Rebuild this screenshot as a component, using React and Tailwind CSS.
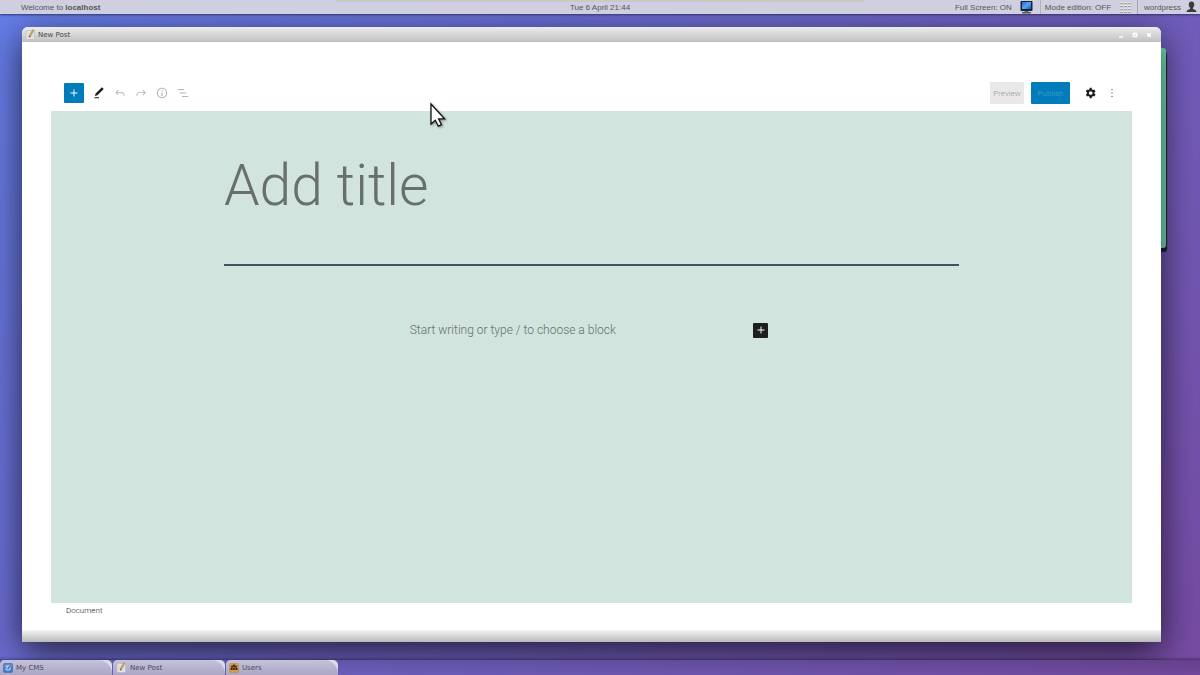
import React from "react";

function NoteIcon() {
  return (
    <svg className="size-[11px] shrink-0" viewBox="0 0 22 22" aria-hidden="true">
      <rect x="2" y="3" width="17" height="18" rx="2" fill="#e3e3e6" stroke="#b4b4b9" />
      <path d="M5 8h11M5 12h11M5 16h11" stroke="#cdcdd2" strokeWidth="1.2" />
      <path d="M15.500 1l2.600 1.400-7 12.400-2.700 1.800.1-3.600z" fill="#e0a548" stroke="#8a7350" strokeWidth=".8" />
      <path d="M8.500 13.500l-.1 3.500 2.700-1.800z" fill="#444" />
    </svg>
  );
}

function CmsIcon() {
  return (
    <svg className="size-[10px] shrink-0" viewBox="0 0 20 20" aria-hidden="true">
      <rect x="1" y="1" width="18" height="18" rx="2" fill="#3a7bd0" stroke="#2e62a8" />
      <rect x="2" y="2" width="16" height="6" fill="#5b9ae6" opacity=".7" />
      <circle cx="10" cy="10" r="5.5" fill="#b9d3f4" />
      <path d="M5 8l5 5 5-7" fill="none" stroke="#4169b5" strokeWidth="2" />
      <path d="M9 9l6-5-3 6z" fill="#d0405a" />
    </svg>
  );
}

function UsersIcon() {
  return (
    <svg className="size-[10px] shrink-0" viewBox="0 0 20 20" aria-hidden="true">
      <rect x="1" y="1" width="18" height="18" rx="2" fill="#d89a4a" stroke="#b98440" />
      <circle cx="6" cy="7" r="2" fill="#3a2a1c" />
      <circle cx="14" cy="7" r="2" fill="#3a2a1c" />
      <circle cx="10" cy="5.500" r="2.400" fill="#3a2a1c" />
      <path d="M3 14v-3c0-1.500 1.500-2 3-2h8c1.500 0 3 .5 3 2v3z" fill="#3a2a1c" />
      <path d="M7.500 10v4M12.500 10v4" stroke="#d89a4a" strokeWidth="1" />
    </svg>
  );
}

function ScreenIcon() {
  return (
    <svg className="h-[13px] w-[13px]" viewBox="0 0 26 26" aria-hidden="true">
      <defs>
        <linearGradient id="screen" x1="0" y1="0" x2="1" y2="1">
          <stop offset="0" stopColor="#1f63d8" />
          <stop offset=".5" stopColor="#5aa2f5" />
          <stop offset="1" stopColor="#1556c4" />
        </linearGradient>
      </defs>
      <rect x="1" y="0" width="24" height="20" rx="2" fill="#1c2130" />
      <rect x="4" y="2" width="18" height="14" fill="url(#screen)" />
      <rect x="9" y="20" width="8" height="2" fill="#6d6d74" />
      <rect x="4" y="22" width="18" height="3" rx="1" fill="#55555c" />
    </svg>
  );
}

function GridIcon() {
  const rows = [0, 3, 6, 9];
  const cols = [0, 4, 8];
  return (
    <svg className="h-[11px] w-[11px]" viewBox="0 0 11 11" shapeRendering="crispEdges" aria-hidden="true">
      {rows.map((y) => cols.map((x) => (
        <g key={`${x}-${y}`}>
          <rect x={x} y={y} width="3" height="1" fill="#e4e4e2" />
          <rect x={x} y={y + 1} width="3" height="1" fill="#a4a4a8" />
        </g>
      )))}
    </svg>
  );
}

function PersonIcon() {
  return (
    <svg className="h-[12px] w-[11px]" viewBox="0 0 22 24" fill="#3b3a3c" aria-hidden="true">
      <path d="M11 1c3.500 0 5.500 2.500 5.500 6 0 3-1.200 5.500-2.700 6.800v2.400c3.500 1 7.200 2 7.200 5.800H1c0-3.800 3.700-4.800 7.200-5.800v-2.400C6.700 12.500 5.500 10 5.500 7c0-3.500 2-6 5.500-6z" />
    </svg>
  );
}

const glyphs = {
  plus: "M18 11.200h-5.200V6h-1.600v5.200H6v1.600h5.200V18h1.600v-5.200H18z",
  edit: "M20.100 5.100L16.900 2 6.200 12.700l-1.300 4.400 4.500-1.300L20.100 5.100zM4 20.800h8v-1.500H4v1.500z",
  undo: "M18.300 11.700c-.6-.6-1.400-.9-2.300-.9H6.700l2.900-3.300-1.100-1-4.500 5L8.500 16l1-1-2.700-2.700H16c.5 0 .9.2 1.300.5 1 1 1 3.400 1 4.500v.3h1.500v-.2c0-1.500 0-4.300-1.500-5.700z",
  redo: "M15.600 6.500l-1.100 1 2.900 3.300H8c-.9 0-1.700.3-2.300.9-1.400 1.500-1.400 4.200-1.400 5.600v.2h1.500v-.3c0-1.100 0-3.500 1-4.500.3-.3.7-.5 1.300-.5h9.200L14.500 15l1.100 1.100 4.600-4.600-4.600-5z",
  info: "M12 3.200c-4.800 0-8.800 3.900-8.800 8.800 0 4.800 3.900 8.800 8.800 8.800 4.800 0 8.800-3.900 8.800-8.800 0-4.800-4-8.800-8.800-8.800zm0 16c-4 0-7.200-3.300-7.200-7.200C4.800 8 8 4.800 12 4.800s7.200 3.300 7.200 7.200c0 4-3.200 7.200-7.200 7.200zM11 17h2v-6h-2v6zm0-8h2V7h-2v2z",
  outline: "M13.800 5.200H3v1.500h10.800V5.200zm-3.600 12v1.500H21v-1.500H10.200zm7.200-6H6.600v1.500h10.800v-1.500z",
  more: "M13 19h-2v-2h2v2zm0-6h-2v-2h2v2zm0-6h-2V5h2v2z",
  gear: "M18 12c0-.4 0-.8-.1-1.200l1.900-1.500-2-3.500-2.300.9c-.6-.5-1.300-.9-2-1.200L13.200 3H9.800l-.4 2.500c-.7.300-1.400.7-2 1.200L5.100 5.800l-2 3.500L5 10.800c-.1.800-.1 1.600 0 2.400l-1.900 1.500 2 3.500 2.300-.9c.6.5 1.300.9 2 1.200l.4 2.500h3.400l.4-2.500c.7-.3 1.400-.7 2-1.200l2.300.9 2-3.500-2-1.500c.1-.4.1-.8.1-1.200zm-6.500 3.200a3.200 3.200 0 1 1 0-6.400 3.200 3.200 0 0 1 0 6.400z",
};

function Glyph({ name, className = "size-[14px]" }) {
  return (
    <svg className={className} viewBox="0 0 24 24" fill="currentColor" fillRule="evenodd" aria-hidden="true">
      <path d={glyphs[name]} />
    </svg>
  );
}

function ToolButton({ name, label, className }) {
  return (
    <button type="button" aria-label={label} className={`flex size-[14px] items-center justify-center ${className}`}>
      <Glyph name={name} />
    </button>
  );
}

function TopBar() {
  return (
    <header className="relative z-10 grid h-[14px] shrink-0 grid-cols-[1fr_auto_1fr] items-center bg-[#cfcfdf] font-['Liberation_Sans',sans-serif] text-[8px] leading-[12px] text-[#55555b] shadow-[0_1px_2px_rgba(30,30,70,0.7)]">
      <div className="absolute top-0 left-[28%] h-[2px] w-[44%] bg-[#c9c9c9]" />
      <p className="pt-[2px] pl-[21px]">Welcome to <b>localhost</b></p>
      <time className="pt-[2px]">Tue 6 April 21:44</time>
      <div className="flex h-[14px] items-center justify-end pr-[3px]">
        <button type="button" className="flex h-[14px] items-center gap-2">
          <span className="pt-[2px]">Full Screen: ON</span>
          <ScreenIcon />
        </button>
        <div className="ml-[7px] h-[14px] w-px bg-[#b2b2bd]" />
        <button type="button" className="ml-1 flex h-[14px] items-center gap-[9px]">
          <span className="pt-[2px]">Mode edition: OFF</span>
          <GridIcon />
        </button>
        <div className="ml-[6px] h-[14px] w-px bg-[#a6a6b0]" />
        <button type="button" className="ml-[6px] flex h-[14px] items-center gap-[5px]">
          <span className="pt-[2px]">wordpress</span>
          <PersonIcon />
        </button>
      </div>
    </header>
  );
}

function TitleBar() {
  return (
    <div className="flex h-[15px] shrink-0 items-center rounded-t-[6px] bg-linear-to-b from-[#ececec] to-[#c1c1c1] pr-2 pl-[3px] font-['DejaVu_Sans',sans-serif] text-[7px] text-[#444]">
      <NoteIcon />
      <h1 className="flex-1 pt-[2px] pl-[2px]">New Post</h1>
      <div className="flex gap-[6px] text-white">
        <button type="button" aria-label="Minimize" className="size-2">
          <svg className="size-2" viewBox="0 0 8 8"><path d="M2 6h4" stroke="currentColor" strokeWidth="1.500" /></svg>
        </button>
        <button type="button" aria-label="Maximize" className="size-2">
          <svg className="size-2" viewBox="0 0 8 8"><path d="M2.500 2.500h3v3h-3z" fill="none" stroke="currentColor" strokeWidth="1.500" /></svg>
        </button>
        <button type="button" aria-label="Close" className="size-2">
          <svg className="size-2" viewBox="0 0 8 8"><path d="M2.200 2.200l3.600 3.600M5.800 2.200L2.200 5.800" stroke="currentColor" strokeWidth="1.500" /></svg>
        </button>
      </div>
    </div>
  );
}

function Toolbar() {
  return (
    <div className="flex h-[36px] shrink-0 items-center justify-between pr-[13px] pl-[13px]">
      <div className="flex items-center gap-2">
        <button type="button" aria-label="Add block" className="flex size-[20px] items-center justify-center rounded-[1px] bg-[#007cba] text-white">
          <Glyph name="plus" />
        </button>
        <div className="flex items-center gap-[7px]">
          <ToolButton name="edit" label="Edit" className="text-[#1e1e1e]" />
          <ToolButton name="undo" label="Undo" className="text-[#b5b5b5]" />
          <ToolButton name="redo" label="Redo" className="text-[#b5b5b5]" />
          <ToolButton name="info" label="Details" className="text-[#b5b5b5]" />
          <ToolButton name="outline" label="Outline" className="text-[#b5b5b5]" />
        </div>
      </div>
      <div className="flex items-center text-[8px] leading-[22px] font-light">
        <button type="button" className="h-[22px] w-[34px] rounded-[1px] bg-[#e8e8e8] pt-px text-[#999]">Preview</button>
        <button type="button" className="ml-[7px] h-[22px] w-[39px] rounded-[1px] bg-[#007cba] pt-px text-[#4fa6d3]">Publish</button>
        <ToolButton name="gear" label="Settings" className="ml-[14px] text-[#1e1e1e]" />
        <ToolButton name="more" label="Options" className="ml-[7px] text-[#555]" />
      </div>
    </div>
  );
}

function Editor() {
  return (
    <div className="flex flex-1 flex-col items-center bg-[#d1e4dd]">
      <div className="mt-[33px] w-[68%] border-b-2 border-[#39414d]/90 pb-[36px]">
        <input
          aria-label="Title"
          placeholder="Add title"
          className="block h-[84px] w-full bg-transparent text-[57px] leading-[84px] font-light text-[#39414d] outline-none placeholder:text-[#68706c]"
        />
      </div>
      <div className="mt-[54px] flex w-[34%] items-center justify-between gap-4">
        <input
          aria-label="Block"
          placeholder="Start writing or type / to choose a block"
          className="h-5 min-w-0 flex-1 bg-transparent pl-[2px] text-[12px] font-light outline-none placeholder:text-[#68706c]"
        />
        <button type="button" aria-label="Add block" className="mr-[7px] flex size-[15px] items-center justify-center rounded-[1px] bg-[#1e1e1e] text-white">
          <Glyph name="plus" />
        </button>
      </div>
    </div>
  );
}

function Taskbar() {
  const tabs = [
    ["My CMS", <CmsIcon />],
    ["New Post", <NoteIcon />],
    ["Users", <UsersIcon />],
  ];
  return (
    <nav className="relative flex h-[15px] shrink-0 gap-px bg-linear-to-b from-black/15 to-black/5 font-['DejaVu_Sans',sans-serif] text-[7px] text-[#4a4760]">
      {tabs.map(([name, icon]) => (
        <button key={name} type="button" className="relative flex h-[15px] w-[112px] items-center gap-[3px] overflow-hidden rounded-t-[5px] bg-[#dcdaec] pl-[3px]">
          <span className="absolute inset-0 rounded-tr-[14px] bg-linear-to-b from-[#c5c2da] to-[#aaa6c4]" />
          <span className="relative">{icon}</span>
          <span className="relative pt-[2px]">{name}</span>
        </button>
      ))}
    </nav>
  );
}

function Cursor() {
  return (
    <svg className="pointer-events-none absolute top-[102px] left-[430px] z-20 h-[28px] w-[18px] drop-shadow-[1px_1px_1px_rgba(0,0,0,0.4)]" viewBox="0 0 18 28" aria-hidden="true">
      <path d="M1 2v20l4.300-3.700 3 5.800 3.200-1.500-2.900-5.700h6z" fill="#fff" stroke="#111" strokeWidth="1.300" />
    </svg>
  );
}

export default function App() {
  return (
    <div className="relative flex min-h-screen flex-col bg-[linear-gradient(135deg,#667eea_0%,#764ba2_100%)] font-[Roboto,sans-serif]">
      <TopBar />
      <main className="relative flex flex-1 flex-col overflow-hidden pt-[13px] pr-[39px] pb-[18px] pl-[22px] shadow-[inset_0_-3px_3px_-2px_rgba(0,0,0,0.4)]">
        <div className="absolute top-[34px] right-[34px] h-[200px] w-[120px] rounded-[3px] bg-[#77e8b8] shadow-[1px_4px_1px_rgba(20,15,40,0.85)]" />
        <section className="relative flex flex-1 flex-col rounded-t-[6px] bg-white shadow-[0_10px_36px_rgba(0,0,0,0.7)]">
          <TitleBar />
          <div className="flex flex-1 flex-col px-[29px] pt-[33px]">
            <Toolbar />
            <Editor />
            <footer className="h-[27px] shrink-0 pl-[15px] text-[8px] leading-[16px] font-light text-[#222]">Document</footer>
          </div>
          <div className="h-[12px] shrink-0 bg-linear-to-b from-[#f4f4f4] to-[#b9b9b9]" />
        </section>
      </main>
      <Taskbar />
      <Cursor />
    </div>
  );
}
